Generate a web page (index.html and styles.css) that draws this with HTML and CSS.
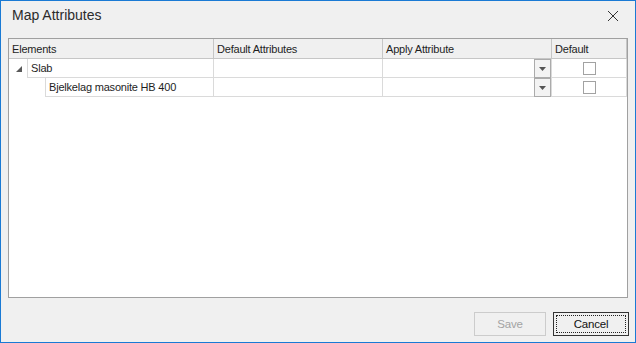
FILE: index.html
```html
<!DOCTYPE html>
<html lang="en">
  <head>
    <meta charset="UTF-8" />
    <title>Map Attributes</title>
    <link rel="stylesheet" href="styles.css">
  </head>
  <body>
    <div class="dialog">
      <div class="titlebar">
        <span class="title">Map Attributes</span>
        <span class="close">
          <svg width="12" height="12" viewBox="0 0 12 12">
            <path d="M1 1 L11 11 M11 1 L1 11" stroke="#333" stroke-width="1" fill="none" />
          </svg>
        </span>
      </div>

      <div class="grid">
        <div class="row header">
          <div class="cell">Elements</div>
          <div class="cell">Default Attributes</div>
          <div class="cell">Apply Attribute</div>
          <div class="cell">Default</div>
        </div>

        <!-- level 0 -->
        <div class="row">
          <div class="cell tree">
            <span class="expander">
              <svg width="6" height="6" viewBox="0 0 6 6">
                <polygon points="6,0 6,6 0,6" fill="#595959" />
              </svg>
            </span>
            <span class="node">Slab</span>
          </div>
          <div class="cell"></div>
          <div class="cell combo">
            <span class="drop-btn">
              <svg width="7" height="4" viewBox="0 0 7 4">
                <polygon points="0,0 7,0 3.5,4" fill="#555" />
              </svg>
            </span>
          </div>
          <div class="cell check"><span class="checkbox"></span></div>
        </div>

        <!-- level 1 -->
        <div class="row">
          <div class="cell tree">
            <span class="indent"></span>
            <span class="node">Bjelkelag masonite HB 400</span>
          </div>
          <div class="cell"></div>
          <div class="cell combo">
            <span class="drop-btn">
              <svg width="7" height="4" viewBox="0 0 7 4">
                <polygon points="0,0 7,0 3.5,4" fill="#555" />
              </svg>
            </span>
          </div>
          <div class="cell check"><span class="checkbox"></span></div>
        </div>
      </div>

      <div class="footer">
        <button class="btn save" disabled>Save</button>
        <button class="btn cancel"><span class="focus">Cancel</span></button>
      </div>
    </div>
  </body>
</html>
```

FILE: styles.css
```css
html,
body {
  margin: 0;
  padding: 0;
}
body {
  font-family: "Segoe UI", "Liberation Sans", Arial, sans-serif;
  color: #1e1e1e;
}
.dialog {
  width: 636px;
  height: 343px;
  box-sizing: border-box;
  border: 1px solid #1a7ad4;
  background: #f0f0f0;
  display: flex;
  flex-direction: column;
}
.titlebar {
  height: 37px;
  box-sizing: border-box;
  display: flex;
  align-items: flex-start;
  justify-content: space-between;
  padding: 6px 0 0 11px;
}
.title {
  font-size: 14px;
  line-height: 16px;
  color: #2b2b2b;
}
.close {
  display: flex;
  margin: 3px 16px 0 0;
}
.grid {
  height: 260px;
  box-sizing: border-box;
  margin: 0 7px;
  border: 1px solid #a0a0a0;
  background: #fff;
}
.row {
  display: grid;
  grid-template-columns: 205px 169px 169px 1fr;
  height: 19px;
  font-size: 11px;
  letter-spacing: -0.2px;
}
.cell {
  box-sizing: border-box;
  border-right: 1px solid #dadada;
  border-bottom: 1px solid #dadada;
  padding-left: 3px;
  display: flex;
  align-items: center;
  white-space: nowrap;
  overflow: hidden;
}
.row.header {
  height: 20px;
  background: #f0f0f0;
}
.header .cell {
  border-right-color: #c6c6c6;
  border-bottom-color: #c6c6c6;
}
.cell.tree {
  padding-left: 0;
  border-bottom: none;
  align-items: stretch;
}
.expander {
  width: 18px;
  display: flex;
  align-items: center;
  justify-content: flex-end;
  padding-right: 5px;
  box-sizing: border-box;
  padding-top: 1px;
}
.indent {
  width: 36px;
}
.node {
  flex: 1;
  border-left: 1px solid #dadada;
  border-bottom: 1px solid #dadada;
  padding-left: 3px;
  display: flex;
  align-items: center;
}
.cell.combo {
  justify-content: flex-end;
  align-items: flex-start;
  padding-left: 0;
  overflow: visible;
}
.drop-btn {
  width: 17px;
  height: 19px;
  margin-bottom: -1px;
  box-sizing: border-box;
  border: 1px solid #ababab;
  background: #f3f3f3;
  display: flex;
  align-items: center;
  justify-content: center;
}
.cell.check {
  justify-content: center;
  padding-left: 0;
}
.checkbox {
  width: 13px;
  height: 13px;
  box-sizing: border-box;
  border: 1px solid #a2a2a2;
  background: #fff;
}
.footer {
  flex: 1;
  display: flex;
  justify-content: flex-end;
  align-items: flex-start;
  gap: 7px;
  padding: 14px 6px 0 0;
}
.btn {
  height: 24px;
  box-sizing: border-box;
  font-family: "Segoe UI", "Liberation Sans", Arial, sans-serif;
  font-size: 11.5px;
  letter-spacing: -0.2px;
  padding: 0;
  background: #f0f0f0;
}
.btn.save {
  width: 72px;
  border: 1px solid #cccccc;
  color: #a3a3a3;
}
.btn.cancel {
  width: 76px;
  border: 1px solid #333;
  color: #111;
  padding: 2px;
  display: flex;
}
.focus {
  flex: 1;
  border: 1px dotted #222;
  display: flex;
  align-items: center;
  justify-content: center;
}
```
